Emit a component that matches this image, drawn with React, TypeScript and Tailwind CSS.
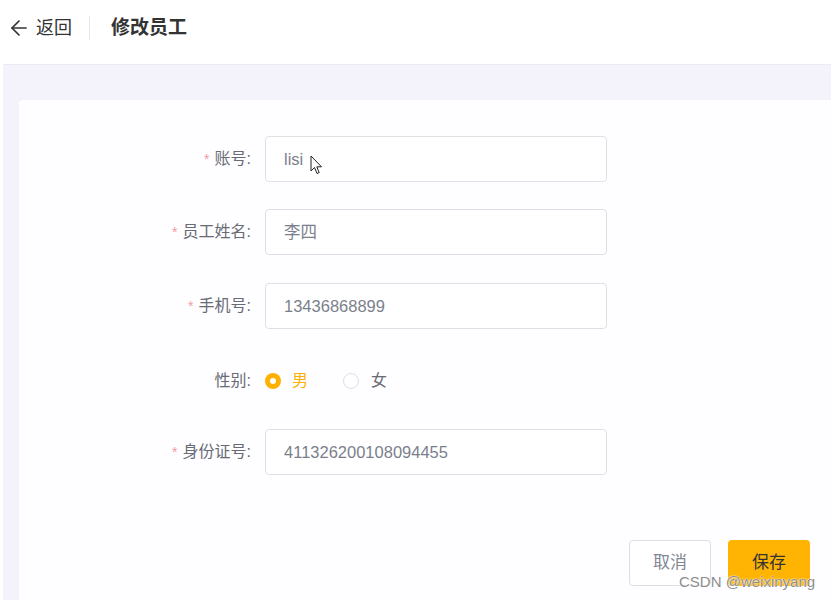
import React from 'react';
import { ArrowLeft } from 'lucide-react';

const font = { fontFamily: '"Liberation Sans", "Noto Sans CJK SC", sans-serif' };

interface FieldProps {
  label: string;
  required?: boolean;
  value: string;
  className?: string;
}

const Field: React.FC<FieldProps> = ({ label, required, value, className = '' }) => (
  <div className={`flex items-center ${className}`}>
    <div className="w-[246px] pr-[14px] text-right text-[16px] text-[#686b73]">
      {required && <span className="mr-[5px] text-[14px] text-[#f39aa4]">*</span>}
      {label}:
    </div>
    <div className="flex h-[46px] w-[342px] items-center rounded-[4px] border border-[#dfe0e6] bg-white pl-[18px] text-[16.5px] text-[#7b7f8c]">
      {value}
    </div>
  </div>
);

export default function App() {
  return (
    <div className="relative h-[600px] w-[831px] overflow-hidden bg-white" style={font}>
      {/* header */}
      <div className="flex h-[56px] items-center pl-[7px]">
        <ArrowLeft size={24} strokeWidth={1.7} className="text-[#333]" />
        <span className="ml-[5px] text-[18px] text-[#333]">返回</span>
        <div className="ml-[17px] h-[24px] w-px bg-[#e4e4e7]" />
        <span className="ml-[21px] text-[19px] font-bold text-[#333]">修改员工</span>
      </div>

      {/* content */}
      <div className="ml-[3px] mt-[8px] h-[536px] border-t border-[#ecebf3] bg-[#f4f3fb] pl-[16px] pt-[35px]">
        <div className="h-[520px] w-[860px] rounded-tl-[4px] bg-[#fefdff] pt-[36px]">
          <Field label="账号" required value="lisi" />
          <Field label="员工姓名" required value="李四" className="mt-[27px]" />
          <Field label="手机号" required value="13436868899" className="mt-[28px]" />

          <div className="mt-[29px] flex h-[46px] items-center">
            <div className="w-[246px] pr-[14px] text-right text-[16px] text-[#686b73]">性别:</div>
            <div className="flex items-center">
              <span className="flex h-[16px] w-[16px] items-center justify-center rounded-full bg-[#ffb100]">
                <span className="h-[6px] w-[6px] rounded-full bg-white" />
              </span>
              <span className="ml-[11px] text-[16px] text-[#ffb100]">男</span>
              <span className="ml-[35px] h-[16px] w-[16px] rounded-full border border-[#dcdfe6] bg-white" />
              <span className="ml-[12px] text-[16px] text-[#686b73]">女</span>
            </div>
          </div>

          <Field label="身份证号" required value="411326200108094455" className="mt-[25px]" />

          <div className="mt-[65px] flex gap-[17px] pl-[610px]">
            <button className="h-[46px] w-[82px] rounded-[4px] border border-[#dcdfe6] bg-white text-[17px] text-[#818693]">
              取消
            </button>
            <button className="h-[46px] w-[82px] rounded-[4px] bg-[#ffb302] text-[17px] text-[#333]">
              保存
            </button>
          </div>
        </div>
      </div>

      {/* mouse cursor */}
      <svg className="absolute left-[310px] top-[155px]" width="13" height="20" viewBox="0 0 13 20">
        <path d="M1 1 L1 16 L4.5 12.5 L7 18.5 L9.2 17.6 L6.8 11.8 L11.5 11.8 Z" fill="#fff" stroke="#222" strokeWidth="1" strokeLinejoin="round" />
      </svg>

      {/* watermark */}
      <div className="absolute left-[679px] top-[571px] text-[15px] text-[#8e8e8e] [text-shadow:0_0_2px_#fff,0_0_1px_#fff]">
        CSDN @weixinyang
      </div>
    </div>
  );
}
